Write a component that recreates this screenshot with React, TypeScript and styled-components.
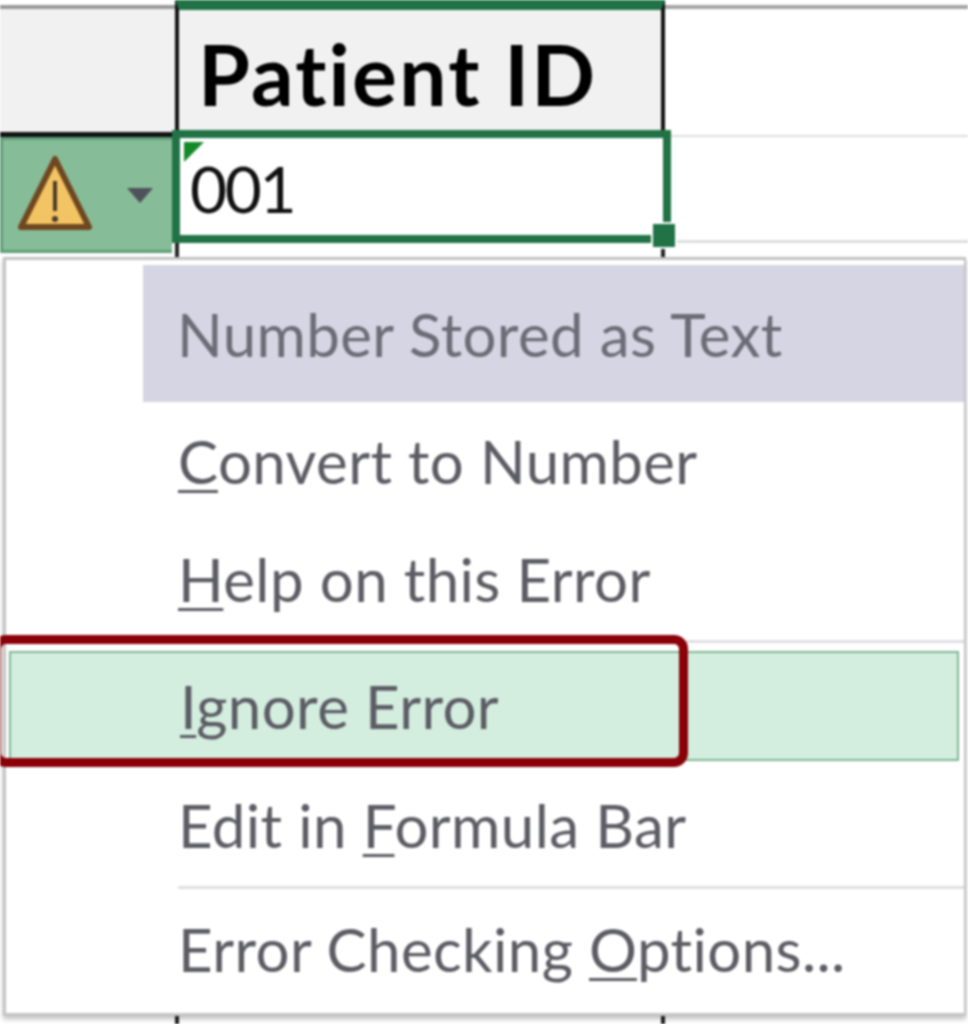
import styled, { createGlobalStyle } from 'styled-components'

const GlobalStyle = createGlobalStyle`
  html, body {
    margin: 0;
    padding: 0;
    background: #fff;
  }
  body {
    font-family: Lato, "Open Sans", sans-serif;
  }
`

const Page = styled.div`
  position: relative;
  width: 968px;
  height: 1024px;
  overflow: hidden;
  background: #fff;
  filter: blur(0.9px);
`

const Sheet = styled.div`
  display: grid;
  grid-template-columns: 175px 490px 1fr;
  grid-template-rows: 132px 106px 1fr;
  height: 100%;
  box-sizing: border-box;
  padding-top: 5px;
`

const Corner = styled.div`
  background: #f1f1f1;
  border-top: 4px solid #999;
  border-bottom: 5px solid #111;
`

const ColumnHeader = styled.div`
  display: flex;
  align-items: center;
  box-sizing: border-box;
  padding: 0 0 0 19px;
  background: #f1f1f1;
  border-top: 10px solid #217346;
  border-left: 4px solid #111;
  border-right: 4px solid #111;
  margin-top: -5px;
  font-weight: 700;
  font-size: 84px;
  letter-spacing: 2.2px;
  color: #000;
`

const TopRest = styled.div`
  border-top: 4px solid #a4a4a4;
  border-bottom: 2px solid #dedede;
`

const RowHeader = styled.div`
  display: flex;
  align-items: center;
  box-sizing: border-box;
  height: 116px;
  padding-left: 13px;
  gap: 33px;
  background: #86bc97;
  border: 3px solid #5f9e78;
  border-right: none;
  margin-right: 3px;
`

const SelectedCell = styled.div`
  position: relative;
  box-sizing: border-box;
  height: 113px;
  margin: -7px -6px 0 -3px;
  padding: 20px 0 0 10px;
  background: #fff;
  border: 8px solid #217346;
  font-size: 64px;
  letter-spacing: -2.4px;
  line-height: 62px;
  color: #111;
`

const ErrorFlag = styled.svg`
  position: absolute;
  left: 4px;
  top: 4px;
`

const FillHandle = styled.span`
  position: absolute;
  right: -14px;
  bottom: -14px;
  width: 26px;
  height: 27px;
  background: #217346;
  border: 2px solid #fff;
  box-sizing: border-box;
`

const RowRest = styled.div`
  border-bottom: 3px solid #dedede;
`

const GridLines = styled.div`
  grid-column: 2;
  border-left: 4px solid #222;
  border-right: 4px solid #222;
`

const Menu = styled.div`
  position: absolute;
  left: 3px;
  top: 257px;
  width: 963px;
  height: 759px;
  box-sizing: border-box;
  padding-top: 5px;
  background: #fff;
  border: 3px solid #c4c4c4;
  border-right-width: 2px;
  box-shadow: 0 3px 5px rgba(0, 0, 0, 0.25);
`

const MenuTitle = styled.div`
  display: flex;
  align-items: center;
  box-sizing: border-box;
  height: 137px;
  margin-left: 137px;
  padding-left: 34px;
  background: #d5d5e3;
  color: #6c6c76;
`

const MenuItem = styled.div<{ $active?: boolean }>`
  display: flex;
  align-items: center;
  box-sizing: border-box;
  height: ${p => (p.$active ? '110px' : '118px')};
  margin: ${p => (p.$active ? '8px 5px 5px 3px' : '0')};
  padding-left: ${p => (p.$active ? '169px' : '172px')};
  background: ${p => (p.$active ? '#d3eedf' : 'transparent')};
  border: ${p => (p.$active ? '2px solid #7fb692' : 'none')};
  color: #5c5c64;
`

const MenuLabel = styled.span`
  font-size: 60px;
  letter-spacing: 0.4px;
  white-space: nowrap;
  u {
    text-underline-offset: 6px;
    text-decoration-thickness: 3px;
  }
`

const Separator = styled.div`
  height: 3px;
  margin: 2px 0 1px 172px;
  background: #dfdfe2;
`

const Highlight = styled.div`
  position: absolute;
  left: -8px;
  top: 635px;
  width: 696px;
  height: 132px;
  box-sizing: border-box;
  border: 9px solid #8b0008;
  border-radius: 14px;
`

const WarningIcon = () => (
  <svg width="78" height="80" viewBox="0 0 78 80">
    <path
      d="M39 4 L73 72 H5 Z"
      fill="#f3c463"
      stroke="#6f4720"
      strokeWidth="6"
      strokeLinejoin="round"
    />
    <path d="M39 26 V56" stroke="#4c3b28" strokeWidth="4" />
    <circle cx="39" cy="64" r="3" fill="#4c3b28" />
  </svg>
)

const Caret = () => (
  <svg width="26" height="16" viewBox="0 0 26 16">
    <path d="M0 1 H26 L13 16 Z" fill="#4e525a" />
  </svg>
)

const App = () => {
  return (
    <Page>
      <GlobalStyle />
      <Sheet>
        <Corner />
        <ColumnHeader>Patient ID</ColumnHeader>
        <TopRest />
        <RowHeader>
          <WarningIcon />
          <Caret />
        </RowHeader>
        <SelectedCell>
          <ErrorFlag width="20" height="20" viewBox="0 0 20 20">
            <path d="M0 0 H20 L0 20 Z" fill="#138a2a" />
          </ErrorFlag>
          001
          <FillHandle />
        </SelectedCell>
        <RowRest />
        <GridLines />
      </Sheet>
      <Menu>
        <MenuTitle>
          <MenuLabel>Number Stored as Text</MenuLabel>
        </MenuTitle>
        <MenuItem>
          <MenuLabel><u>C</u>onvert to Number</MenuLabel>
        </MenuItem>
        <MenuItem>
          <MenuLabel><u>H</u>elp on this Error</MenuLabel>
        </MenuItem>
        <Separator />
        <MenuItem $active>
          <MenuLabel><u>I</u>gnore Error</MenuLabel>
        </MenuItem>
        <MenuItem>
          <MenuLabel>Edit in <u>F</u>ormula Bar</MenuLabel>
        </MenuItem>
        <Separator />
        <MenuItem>
          <MenuLabel>Error Checking <u>O</u>ptions...</MenuLabel>
        </MenuItem>
      </Menu>
      <Highlight />
    </Page>
  )
}

export default App
